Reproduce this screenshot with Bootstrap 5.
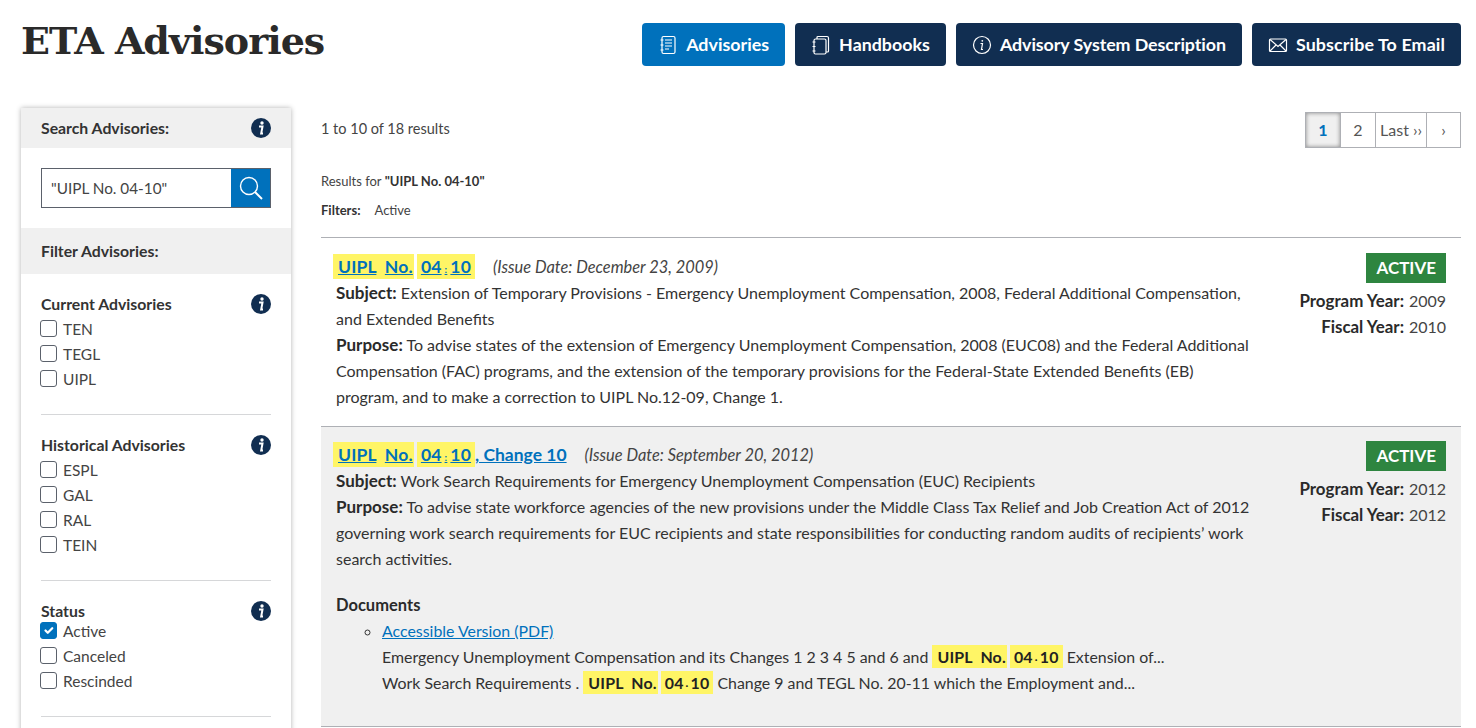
<!DOCTYPE html>
<html lang="en"><head><meta charset="utf-8"><title>ETA Advisories</title>
<link href="https://cdn.jsdelivr.net/npm/bootstrap@5.3.0/dist/css/bootstrap.min.css" rel="stylesheet">
<style>
html,body{height:728px;overflow:hidden}
body{font-family:"Lato","Liberation Sans",sans-serif;font-size:16px;line-height:26px;color:#333;background:#fff}
.page-wrap{padding:0 15px 0 21px}
.top-bar{height:108px}
.page-title{font-family:"DejaVu Serif","Liberation Serif",serif;font-weight:700;font-size:38px;letter-spacing:-1px;line-height:50px;color:#2a2a2a;margin:16px 0 0 0}
.top-btns{padding-top:23px;gap:10px}
.act-btn,.act-btn:hover{height:43px;padding:0 16px;border-radius:4px;background:#112e51;color:#fff;font-weight:700;font-size:17.850px;line-height:1;border:0;gap:8px;display:flex;align-items:center}
.act-btn.on,.act-btn.on:hover{background:#0071bc}
.act-btn.snug{letter-spacing:-.08px}
.act-btn.loose{letter-spacing:.11px}
.side-col{width:270px;flex:none;box-shadow:0 0 5px rgba(0,0,0,.3);height:640px}
.side-head{background:#f0f0f0;font-weight:700;font-size:15.800px;padding:0 20px;color:#333}
.side-head.search-head{height:40px}
.side-head.filter-head{height:46px}
.info-dot{width:20px;height:20px;flex:none}
.search-box{padding:20px}
.search-box input{border:1px solid #5b616b;border-right:0;height:40px;width:190px;padding:0 9px;font:inherit;font-size:15.300px;color:#444;border-radius:0;outline:0}
.search-go{width:40px;height:40px;background:#0071bc;border:1px solid #5b616b;border-left:0;padding:0;display:flex;align-items:center;justify-content:center}
.filter-sec{margin:0 20px;padding:18px 0 23px;border-bottom:1px solid #d6d7d9}
.filter-sec h3{font-size:15.800px;font-weight:700;line-height:24px;margin:0;color:#333}
.filter-sec .info-dot{margin-top:2px}
.tick{height:25px;display:flex;align-items:center;gap:6px;font-size:15.500px;color:#444;margin-left:-1px}
.tick .form-check-input{width:17px;height:17px;margin:0;border:1px solid #5b616b;border-radius:3px;flex:none}
.tick .form-check-input:checked{background-color:#0071bc;border-color:#0071bc}
.status-first{margin-top:-5px}
.main-col{margin-left:30px;flex:1;min-width:0}
.top-line{height:65px}
.res-count{font-size:14.500px;color:#444;padding-top:8px}
.pager{display:flex;border:1px solid #aeb0b5;height:36px;margin-top:4px;font-size:16px;color:#555}
.pager div{display:flex;align-items:center;justify-content:center;border-left:1px solid #aeb0b5;width:35px}
.pager div:first-child{border-left:0;width:34px;color:#0071bc;font-weight:700;background:#f0f0f0;box-shadow:inset 0 0 4px #888}
.pager div:last-child{width:34px}
.pager div.wide{width:51px}
.small-note{font-size:13px;line-height:16px;color:#444}
.small-note b{color:#333;margin-right:14px}
.small-note.note-a b{margin:0}
.note-a{height:29px}
.note-b{height:35px}
.res-row{border-top:1px solid #aeb0b5;padding:16px 15px;display:flex}
.res-row.shade{background:#f0f0f0;padding:15px 15px 30px;border-bottom:1px solid #aeb0b5}
.res-text{width:918px;flex:none}
.res-text>b,.res-text>div>b{font-size:17px}
.res-title{font-size:17.500px;font-weight:700;margin-left:-3px;height:26px}
.res-title a{color:#0071bc}
.issue{font-style:italic;font-size:16.400px;font-weight:400;color:#444;margin-left:18px}
.hit{background:#fff566;padding:2px 5px;font-weight:700;color:#222;word-spacing:4px;letter-spacing:.2px}
.hit.one{margin-right:3px;padding-right:1px}
.hit.two{padding:2px 4px;word-spacing:0}
.tiny{font-size:10px;line-height:1;padding:0 2px}
.res-title .tiny{padding:0 3px}
.res-text b,.res-meta b{color:#2a2a2a}
.res-meta{flex:1;text-align:right;line-height:26px;white-space:nowrap;margin-top:-1px}
.res-meta b{font-size:16.900px}
.state{display:inline-block;background:#2e8540;color:#fff;font-weight:700;font-size:17px;line-height:30px;padding:0 10px;margin-bottom:5px}
.meta-val{display:inline-block;width:42px;text-align:right;color:#444}
.doc-title{margin-top:20px;font-weight:700;font-size:16.500px;color:#2a2a2a}
.doc-list{list-style:circle;padding-left:46px;margin:0;font-size:15.900px}
.doc-list a{color:#0071bc}
</style></head><body>
<div class="page-wrap">
<div class="top-bar d-flex justify-content-between">
<h1 class="page-title">ETA Advisories</h1>
<div class="top-btns d-flex align-items-start">
<button class="btn act-btn on"><svg width="20" height="20" viewBox="0 0 20 20" fill="none" stroke="#fff" stroke-width="1.200"><rect x="4" y="1.500" width="13" height="17" rx="1.500"/><path d="M7 5h7M7 8h7M7 11h7M7 14h4M2.500 5h3M2.500 10h3M2.500 15h3"/></svg>Advisories</button>
<button class="btn act-btn"><svg width="20" height="20" viewBox="0 0 20 20" fill="none" stroke="#fff" stroke-width="1.200"><rect x="3" y="4" width="12" height="15" rx="1.500"/><path d="M6 4V2.500A1 1 0 0 1 7 1.500h9a1.500 1.500 0 0 1 1.500 1.500v13a1 1 0 0 1-1 1H15M1.500 7h3M1.500 11.500h3M1.500 16h3"/></svg>Handbooks</button>
<button class="btn act-btn snug"><svg width="20" height="20" viewBox="0 0 20 20" fill="none" stroke="#fff" stroke-width="1.200"><circle cx="10" cy="10" r="8.500"/><circle cx="10.300" cy="5.800" r=".9" fill="#fff" stroke="none"/><path d="M8.500 8.500h2l-1 6h1.500"/></svg>Advisory System Description</button>
<button class="btn act-btn loose"><svg width="20" height="20" viewBox="0 0 20 20" fill="none" stroke="#fff" stroke-width="1.200"><rect x="1.500" y="4" width="17" height="12.500" rx="1"/><path d="M2 4.500l8 7 8-7M2 16l6-6M18 16l-6-6"/></svg>Subscribe To Email</button>
</div></div>
<div class="d-flex">
<aside class="side-col">
<div class="side-head search-head d-flex justify-content-between align-items-center">Search Advisories:<svg class="info-dot" viewBox="0 0 20 20"><circle cx="10" cy="10" r="10" fill="#112e51"/><circle cx="11" cy="5" r="1.700" fill="#fff"/><path d="M8 8.500h3.500l-1.300 7H12" fill="none" stroke="#fff" stroke-width="2"/></svg></div>
<div class="search-box d-flex"><input type="text" value="&quot;UIPL No. 04-10&quot;"><button class="search-go" aria-label="Search"><svg width="26" height="26" viewBox="0 0 26 26" fill="none" stroke="#fff" stroke-width="1.400"><circle cx="11" cy="11" r="8.500"/><path d="M17 17l7 7" stroke-width="2"/></svg></button></div>
<div class="side-head filter-head d-flex align-items-center">Filter Advisories:</div>
<div class="filter-sec">
<div class="d-flex justify-content-between"><h3>Current Advisories</h3><svg class="info-dot" viewBox="0 0 20 20"><circle cx="10" cy="10" r="10" fill="#112e51"/><circle cx="11" cy="5" r="1.700" fill="#fff"/><path d="M8 8.500h3.500l-1.300 7H12" fill="none" stroke="#fff" stroke-width="2"/></svg></div>
<label class="tick"><input class="form-check-input" type="checkbox">TEN</label><label class="tick"><input class="form-check-input" type="checkbox">TEGL</label><label class="tick"><input class="form-check-input" type="checkbox">UIPL</label>
</div>
<div class="filter-sec">
<div class="d-flex justify-content-between"><h3>Historical Advisories</h3><svg class="info-dot" viewBox="0 0 20 20"><circle cx="10" cy="10" r="10" fill="#112e51"/><circle cx="11" cy="5" r="1.700" fill="#fff"/><path d="M8 8.500h3.500l-1.300 7H12" fill="none" stroke="#fff" stroke-width="2"/></svg></div>
<label class="tick"><input class="form-check-input" type="checkbox">ESPL</label><label class="tick"><input class="form-check-input" type="checkbox">GAL</label><label class="tick"><input class="form-check-input" type="checkbox">RAL</label><label class="tick"><input class="form-check-input" type="checkbox">TEIN</label>
</div>
<div class="filter-sec">
<div class="d-flex justify-content-between"><h3>Status</h3><svg class="info-dot" viewBox="0 0 20 20"><circle cx="10" cy="10" r="10" fill="#112e51"/><circle cx="11" cy="5" r="1.700" fill="#fff"/><path d="M8 8.500h3.500l-1.300 7H12" fill="none" stroke="#fff" stroke-width="2"/></svg></div>
<label class="tick status-first"><input class="form-check-input" type="checkbox" checked>Active</label><label class="tick"><input class="form-check-input" type="checkbox">Canceled</label><label class="tick"><input class="form-check-input" type="checkbox">Rescinded</label>
</div>
</aside>
<main class="main-col">
<div class="top-line d-flex justify-content-between"><div class="res-count">1 to 10 of 18 results</div>
<div><div class="pager"><div>1</div><div>2</div><div class="wide">Last ››</div><div>›</div></div></div></div>
<div class="small-note note-a">Results for <b>"UIPL No. 04-10"</b></div>
<div class="small-note note-b"><b>Filters:</b>Active</div>
<div class="res-row">
<div class="res-text">
<div class="res-title"><span class="hit one"><a href="#">UIPL</a> <a href="#">No.</a></span><span class="hit two"><a href="#">04</a><span class="tiny"><a href="#">:</a></span><a href="#">10</a></span><span class="issue">(Issue Date: December 23, 2009)</span></div>
<div><b>Subject:</b> Extension of Temporary Provisions - Emergency Unemployment Compensation, 2008, Federal Additional Compensation, and Extended Benefits</div>
<div><b>Purpose:</b> To advise states of the extension of Emergency Unemployment Compensation, 2008 (EUC08) and the Federal Additional Compensation (FAC) programs, and the extension of the temporary provisions for the Federal-State Extended Benefits (EB) program, and to make a correction to UIPL No.12-09, Change 1.</div>
</div>
<div class="res-meta"><span class="state">ACTIVE</span><div><b>Program Year:</b><span class="meta-val">2009</span></div><div><b>Fiscal Year:</b><span class="meta-val">2010</span></div></div>
</div>
<div class="res-row shade">
<div class="res-text">
<div class="res-title"><span class="hit one"><a href="#">UIPL</a> <a href="#">No.</a></span><span class="hit two"><a href="#">04</a><span class="tiny"><a href="#">:</a></span><a href="#">10</a></span><a href="#">, Change 10</a><span class="issue">(Issue Date: September 20, 2012)</span></div>
<div><b>Subject:</b> Work Search Requirements for Emergency Unemployment Compensation (EUC) Recipients</div>
<div><b>Purpose:</b> To advise state workforce agencies of the new provisions under the Middle Class Tax Relief and Job Creation Act of 2012 governing work search requirements for EUC recipients and state responsibilities for conducting random audits of recipients’ work search activities.</div>
<div class="doc-title">Documents</div>
<ul class="doc-list"><li><a href="#">Accessible Version (PDF)</a><br>Emergency Unemployment Compensation and its Changes 1 2 3 4 5 and 6 and <span class="hit one">UIPL No.</span><span class="hit two">04<span class="tiny">·</span>10</span> Extension of...<br>Work Search Requirements . <span class="hit one">UIPL No.</span><span class="hit two">04<span class="tiny">·</span>10</span> Change 9 and TEGL No. 20-11 which the Employment and...</li></ul>
</div>
<div class="res-meta"><span class="state">ACTIVE</span><div><b>Program Year:</b><span class="meta-val">2012</span></div><div><b>Fiscal Year:</b><span class="meta-val">2012</span></div></div>
</div>
</main>
</div></div>
</body></html>
